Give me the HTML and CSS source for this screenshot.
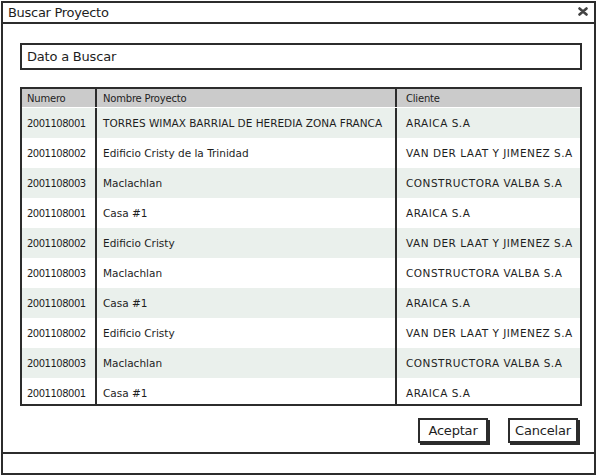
FILE: index.html
```html
<!DOCTYPE html>
<html>
<head>
<meta charset="utf-8">
<link rel="stylesheet" href="styles.css">
</head>
<body>
<div class="window">
  <div class="titlebar">
    <span class="title">Buscar Proyecto</span>
    <svg class="close" width="10" height="9" viewBox="0 0 10 9"><path d="M1.5 1.5 L8.5 7.5 M8.5 1.5 L1.5 7.5" stroke="#444" stroke-width="2.6" stroke-linecap="round"/></svg>
  </div>
  <div class="content">
    <div class="search">Dato a Buscar</div>
    <div class="table">
      <div class="row head"><div class="c1">Numero</div><div class="c2">Nombre Proyecto</div><div class="c3">Cliente</div></div>
      <div class="row alt"><div class="c1">2001108001</div><div class="c2">TORRES WIMAX BARRIAL DE HEREDIA ZONA FRANCA</div><div class="c3">ARAICA S.A</div></div>
      <div class="row"><div class="c1">2001108002</div><div class="c2">Edificio Cristy de la Trinidad</div><div class="c3">VAN DER LAAT Y JIMENEZ S.A</div></div>
      <div class="row alt"><div class="c1">2001108003</div><div class="c2">Maclachlan</div><div class="c3">CONSTRUCTORA VALBA S.A</div></div>
      <div class="row"><div class="c1">2001108001</div><div class="c2">Casa #1</div><div class="c3">ARAICA S.A</div></div>
      <div class="row alt"><div class="c1">2001108002</div><div class="c2">Edificio Cristy</div><div class="c3">VAN DER LAAT Y JIMENEZ S.A</div></div>
      <div class="row"><div class="c1">2001108003</div><div class="c2">Maclachlan</div><div class="c3">CONSTRUCTORA VALBA S.A</div></div>
      <div class="row alt"><div class="c1">2001108001</div><div class="c2">Casa #1</div><div class="c3">ARAICA S.A</div></div>
      <div class="row"><div class="c1">2001108002</div><div class="c2">Edificio Cristy</div><div class="c3">VAN DER LAAT Y JIMENEZ S.A</div></div>
      <div class="row alt"><div class="c1">2001108003</div><div class="c2">Maclachlan</div><div class="c3">CONSTRUCTORA VALBA S.A</div></div>
      <div class="row"><div class="c1">2001108001</div><div class="c2">Casa #1</div><div class="c3">ARAICA S.A</div></div>
    </div>
    <div class="buttons">
      <div class="btn">Aceptar</div>
      <div class="btn">Cancelar</div>
    </div>
  </div>
  <div class="status"></div>
</div>
</body>
</html>
```

FILE: styles.css
```css
html, body {
  margin: 0;
  padding: 0;
  background: #ffffff;
}
body {
  font-family: "DejaVu Sans", "Liberation Sans", sans-serif;
  color: #1e1e1e;
}
.window {
  margin: 1px 0 0 1px;
  width: 591px;
  height: 470px;
  border: 2px solid #2c2c2c;
  display: flex;
  flex-direction: column;
  background: #fff;
}
.titlebar {
  height: 19px;
  border-bottom: 2px solid #2c2c2c;
  display: flex;
  align-items: center;
  justify-content: space-between;
  padding: 0 6px 0 5px;
}
.title {
  font-size: 13px;
  letter-spacing: -0.3px;
}
.close {
  margin-top: -3px;
}
.content {
  flex: 1;
  display: flex;
  flex-direction: column;
  padding: 19px 12px 0 17px;
}
.search {
  height: 23px;
  border: 2px solid #2c2c2c;
  font-size: 13px;
  line-height: 23px;
  padding-left: 5px;
  letter-spacing: -0.2px;
}
.table {
  margin-top: 17px;
  height: 315px;
  border: 2px solid #2c2c2c;
  overflow: hidden;
}
.row {
  display: grid;
  grid-template-columns: 75px 300px 1fr;
  height: 30px;
  font-size: 10.5px;
  letter-spacing: 0;
}
.row > div {
  display: flex;
  align-items: center;
  padding-left: 6px;
  white-space: nowrap;
  overflow: hidden;
}
.row .c1 {
  font-size: 10px;
  letter-spacing: -0.5px;
  padding-left: 5px;
}
.row .c3 {
  padding-left: 9px;
  letter-spacing: 0.5px;
}
.row .c1, .row .c2 {
  border-right: 2px solid #2c2c2c;
}
.row.head {
  height: 18px;
  background: #cbcbcb;
  margin: 0 0 1px 0;
}
.row.head > div {
  letter-spacing: -0.2px;
  font-size: 10px;
}
.row.alt {
  background: #eaf0ec;
}
.buttons {
  display: flex;
  justify-content: flex-end;
  gap: 20px;
  margin-top: 12px;
  padding-right: 4px;
}
.btn {
  height: 21px;
  width: 66px;
  border: 2px solid #2c2c2c;
  box-shadow: 2px 2px 0 #2c2c2c;
  font-size: 13px;
  line-height: 21px;
  text-align: center;
  letter-spacing: -0.2px;
}
.status {
  height: 19px;
  border-top: 2px solid #2c2c2c;
  margin-top: auto;
}
```
